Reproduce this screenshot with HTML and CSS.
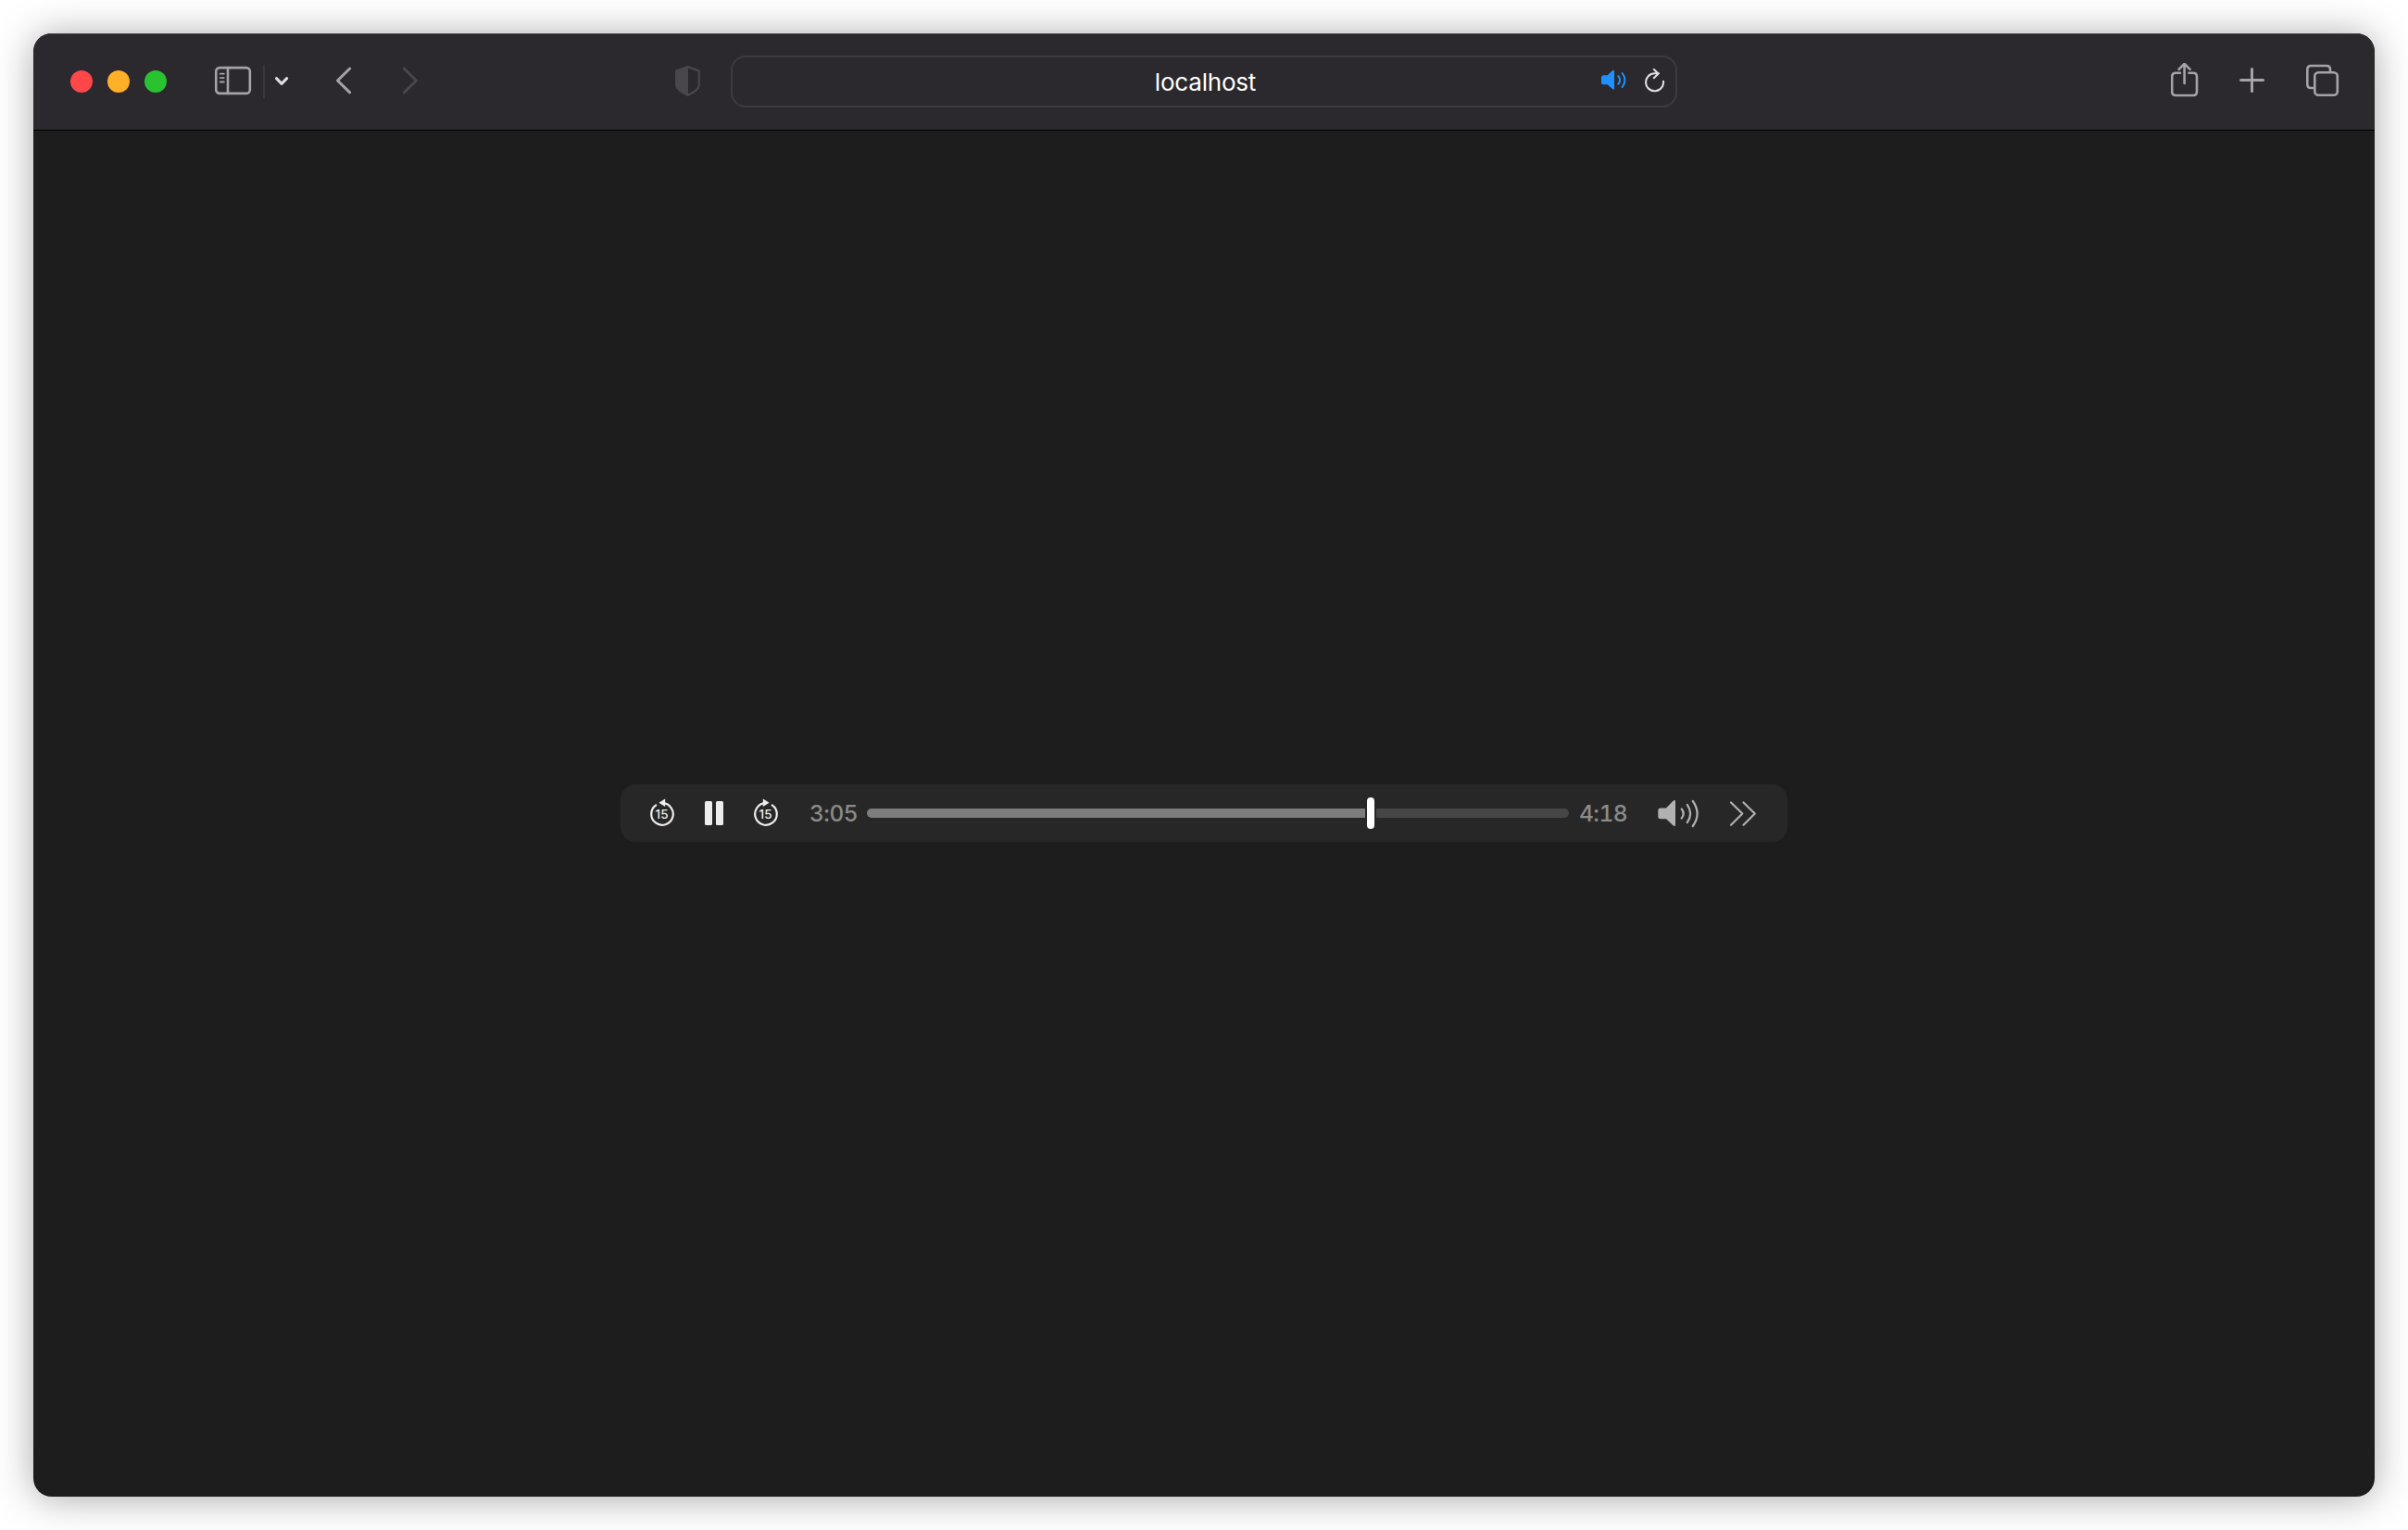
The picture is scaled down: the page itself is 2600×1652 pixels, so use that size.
FILE: index.html
```html
<!DOCTYPE html>
<html lang="en">
<head>
<meta charset="utf-8">
<title>localhost</title>
<link rel="stylesheet" href="styles.css">
</head>
<body>
<main class="window">
  <header class="toolbar">
    <div class="lights"><i class="light close"></i><i class="light minimize"></i><i class="light maximize"></i></div>
    <svg class="icon sidebar" width="40" height="40" viewBox="0 0 40 40"><rect x="1.25" y="5.1" width="36.6" height="27.8" rx="4"/><path d="M14 5v28"/><path class="thin" d="M5.8 11.7h4M5.8 16.1h4M5.8 20.5h4"/></svg>
    <span class="divider"></span>
    <svg class="icon chevron" width="16" height="40" viewBox="0 0 16 40"><path d="M2.500 16.600l5.600 5.800 5.600-5.800"/></svg>
    <svg class="icon back" width="18" height="40" viewBox="0 0 18 40"><path d="M15.700 6L2.500 19l13.200 12.800"/></svg>
    <svg class="icon forward" width="18" height="40" viewBox="0 0 18 40"><path d="M2.300 6l13.200 13L2.300 31.800"/></svg>
    <svg class="icon shield" width="30" height="40" viewBox="0 0 30 40"><path d="M14.700 4.100L26.800 8.600V24c0 3.400-5 7.500-12.100 10.800C7.600 31.500 2.200 27.400 2.200 24V8.600z"/><path class="solid" d="M15 3.100L2 8v16.500c0 3.500 5.500 7.500 13 11z"/></svg>
    <div class="address">
      <span class="host">localhost</span>
      <div class="tools">
        <svg class="audio" width="30" height="40" viewBox="0 0 30 40"><path class="solid" d="M3.500 13.200H7.500L13 8.300Q15 7 15 9v18.500Q15 29.500 13 28L7.500 23.200H3.500Q1 23.200 1 20.700v-5Q1 13.200 3.500 13.200z"/><path d="M19.300 14.200q3.600 4.300 0 8.600M23.600 11q5.600 7.400 0 15"/></svg>
        <svg class="icon reload" width="24" height="40" viewBox="0 0 24 40"><path d="M21 19.800A9.500 9.500 0 1 1 11.500 11.300H16M10.800 7L15.600 11.400 10.800 16.200"/></svg>
      </div>
    </div>
    <svg class="icon share" width="30" height="40" viewBox="0 0 30 40"><path d="M10 10.700H5.200Q1.200 10.700 1.200 14.700V31Q1.200 35 5.200 35H24Q28 35 28 31V14.700Q28 10.700 24 10.700H19.500M14.600 22V1.300M8.600 6.800l6-6 6 6"/></svg>
    <svg class="icon plus" width="28" height="40" viewBox="0 0 28 40"><path d="M1.500 18.500h24.100M13.500 6.500v24"/></svg>
    <svg class="icon tabs" width="36" height="40" viewBox="0 0 36 40"><rect x="9.300" y="10.300" width="24.500" height="24.500" rx="4"/><path d="M8.500 27H5.200Q1.300 27 1.300 23V7Q1.300 3 5.300 3H22Q26 3 26 7v2.500"/></svg>
  </header>
  <section class="page">
    <div class="player">
      <svg class="control skip" width="28" height="32" viewBox="0 0 28 32"><path d="M7.200 7.360A11.800 11.800 0 1 0 14 5.200"/><path class="solid" d="M10.400 4.800L17.200.600V9z"/><text x="13.600" y="22">15</text></svg>
      <div class="pause"><i></i><i></i></div>
      <svg class="control skip ahead" width="28" height="32" viewBox="0 0 28 32"><path d="M20.800 7.360A11.800 11.800 0 1 1 14 5.200"/><path class="solid" d="M17.600 4.800L10.800.600V9z"/><text x="13.600" y="22">15</text></svg>
      <span class="time elapsed">3:05</span>
      <div class="scrubber"><span class="played"></span><span class="thumb"></span><span class="remaining"></span></div>
      <span class="time total">4:18</span>
      <svg class="control volume" width="46" height="32" viewBox="0 0 46 32"><path class="solid" d="M3 10.500H9L16.500 2.700Q19 1 19 3.500v25Q19 31 16.500 29.200L9 22.300H3Q.300 22.300 .300 19.500v-6.200Q.300 10.500 3 10.500z"/><path d="M25.700 11.500q4 5 0 10M31.800 6.800q6.600 9.700 0 19.200M37.800 3q9.600 13.500 0 27"/></svg>
      <svg class="control more" width="30" height="32" viewBox="0 0 30 32"><path d="M2 4.500l12.300 12L2 28.700M15.500 4.500l12.300 12-12.300 12.200"/></svg>
    </div>
  </section>
</main>
</body>
</html>
```

FILE: styles.css
```css
* { box-sizing: border-box; }

body {
  margin: 0;
  height: 1652px;
  padding: 36px;
  overflow: hidden;
  background: #fff;
  font-family: Inter, "Liberation Sans", sans-serif;
}

svg {
  display: block;
  flex: none;
  fill: none;
  stroke-width: 2.6;
  stroke-linecap: round;
  stroke-linejoin: round;
}

.window {
  display: flex;
  flex-direction: column;
  width: 2528px;
  height: 1580px;
  border-radius: 20px;
  overflow: hidden;
  background: #1d1d1d;
  box-shadow: 0 2px 42px rgba(0, 0, 0, .34);
}

.toolbar {
  display: flex;
  flex: none;
  align-items: center;
  height: 105px;
  padding: 0 38px 0 40px;
  background: #2b292e;
  border-bottom: 1px solid #000;
  box-shadow: inset 0 1px #4b4a4e;
}

.lights { display: flex; gap: 16px; }
.light { width: 24px; height: 24px; border-radius: 50%; }
.close { background: #ff4649; }
.minimize { background: #ffb026; }
.maximize { background: #29c231; }

.icon { stroke: #a5a3a8; }
.sidebar { margin-left: 52px; }
.sidebar .thin { stroke-width: 1.8; }
.divider { width: 2px; height: 36px; margin-left: 12px; background: #39373c; }
.chevron { margin-left: 10px; stroke: #dedde0; stroke-width: 3; }
.back { margin-left: 50px; stroke-width: 3; }
.forward { margin-left: 54px; stroke: #49474c; stroke-width: 3; }
.shield { margin-left: 276px; stroke: #49474c; stroke-width: 2.2; }
.shield .solid { fill: #49474c; stroke: none; }

.address {
  display: grid;
  grid-template-columns: 1fr auto 1fr;
  align-items: center;
  width: 1022px;
  height: 56px;
  margin-left: 31px;
  border: 2px solid #3d3b40;
  border-radius: 16px;
}

.host {
  grid-column: 2;
  padding: 2px 0 0 3px;
  color: #fff;
  font-size: 26px;
  line-height: 32px;
  letter-spacing: -.2px;
}

.tools { display: flex; justify-content: flex-end; gap: 17px; padding-right: 10px; }
.audio { stroke: #2190ff; stroke-width: 2; }
.audio .solid { fill: #2190ff; stroke: none; }
.reload { stroke: #dedde0; stroke-width: 2.1; }

.share { margin-left: auto; }
.plus, .tabs { margin-left: 44px; }
.plus { stroke-width: 3; }

.page {
  display: flex;
  flex: 1;
  align-items: flex-start;
  justify-content: center;
  padding-top: 706px;
}

.player {
  display: flex;
  align-items: center;
  width: 1260px;
  height: 62px;
  padding: 0 33px 0 31px;
  border-radius: 16px;
  background: #272727;
}

.control { stroke: #b1b1b1; stroke-width: 2.2; }
.control .solid { fill: #b1b1b1; stroke: none; }
.skip { stroke: #ededed; }
.skip .solid { fill: #ededed; }
.skip text {
  fill: #ededed;
  stroke: none;
  font-size: 13.5px;
  font-weight: 500;
  text-anchor: middle;
}

.pause { display: flex; gap: 4px; margin-left: 32px; }
.pause i { width: 8px; height: 26px; border-radius: 1.5px; background: #ededed; }
.ahead { margin-left: 32px; }

.time {
  flex: none;
  color: #8b8b8b;
  font-size: 24.5px;
  font-weight: 500;
  line-height: 30px;
  letter-spacing: -.5px;
  white-space: nowrap;
  font-variant-numeric: tabular-nums;
}

.elapsed { width: 52px; margin-left: 33px; }
.scrubber { display: flex; align-items: center; gap: 2px; width: 758px; margin-left: 10px; }
.played { width: 538px; height: 10px; border-radius: 5px 0 0 5px; background: #7d7d7d; }
.thumb { width: 8px; height: 34px; border-radius: 4px; background: #fff; }
.remaining { flex: 1; height: 10px; border-radius: 0 5px 5px 0; background: #464646; }
.total { width: 54px; margin-left: 11px; }
.volume { margin-left: 31px; }
.more { margin-left: auto; }
```
